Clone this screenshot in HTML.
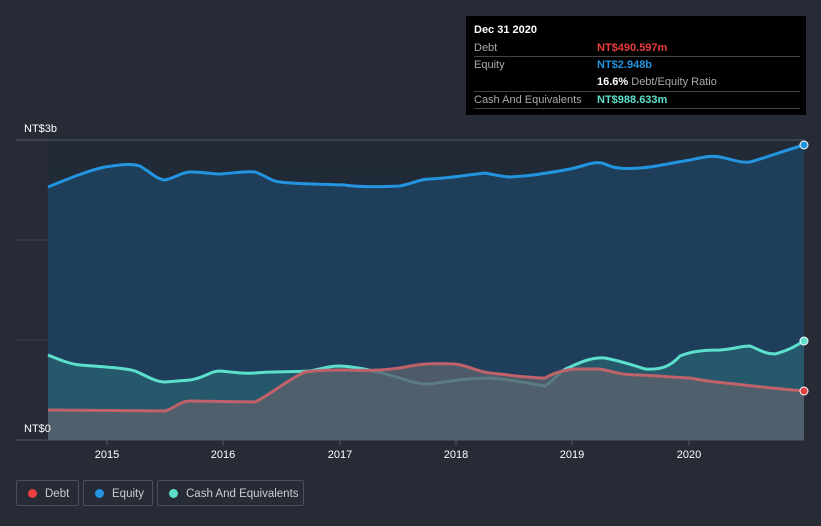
<!DOCTYPE html>
<html><head><style>
body{margin:0;width:821px;height:526px;background:#262b36;font-family:"Liberation Sans",sans-serif;overflow:hidden;position:relative}
.tt{position:absolute;left:466px;top:16px;width:340px;height:99px;background:#000;color:#fff;font-size:11px}
.tt .r{position:absolute;left:8px;width:326px;border-bottom:1px solid #444}
.lbl{color:#aaa;position:absolute;left:0}
.val{position:absolute;left:123px;font-weight:bold}
.leg{position:absolute;top:480px;height:26px;border:1px solid #4a5060;border-radius:2px;color:#ccc;font-size:11.5px;line-height:26px;box-sizing:border-box;white-space:nowrap;overflow:hidden}
.leg i{display:inline-block;width:9px;height:9px;border-radius:50%;margin:0 8px 0 11px;vertical-align:-1px}
</style></head><body>
<svg width="821" height="526" style="position:absolute;left:0;top:0">
<defs><linearGradient id="bg" x1="0" y1="0" x2="0" y2="1"><stop offset="0" stop-color="#222a36"/><stop offset="1" stop-color="#1a2c40"/></linearGradient></defs>
<rect x="48" y="140" width="756" height="300" fill="url(#bg)"/>
<line x1="16" y1="140" x2="804" y2="140" stroke="#555a66"/>
<line x1="16" y1="240" x2="804" y2="240" stroke="#3a4150"/>
<line x1="16" y1="340" x2="804" y2="340" stroke="#3a4150"/>
<path d="M48,187 C70,178 90,170 105,167 C120,165 130,163 140,166 C150,172 158,180 165,180 C175,178 182,172 190,172 C205,172 212,174 220,174 C235,173 245,171 255,172 C265,175 270,181 280,182 C295,184 315,184 345,185 C355,187 380,187 400,186 C415,183 420,179 430,179 C450,178 460,176 485,173 C495,175 505,177 510,177 C525,176 535,175 540,174 C555,172 565,170 570,169 C585,166 595,160 605,164 C615,169 625,169 640,168 C655,167 665,164 690,160 C700,158 710,155 720,157 C735,160 740,163 750,162 C765,158 780,152 804,145 L804,440 L48,440 Z" fill="#1f4260" opacity=".85"/>
<path d="M48,187 C70,178 90,170 105,167 C120,165 130,163 140,166 C150,172 158,180 165,180 C175,178 182,172 190,172 C205,172 212,174 220,174 C235,173 245,171 255,172 C265,175 270,181 280,182 C295,184 315,184 345,185 C355,187 380,187 400,186 C415,183 420,179 430,179 C450,178 460,176 485,173 C495,175 505,177 510,177 C525,176 535,175 540,174 C555,172 565,170 570,169 C585,166 595,160 605,164 C615,169 625,169 640,168 C655,167 665,164 690,160 C700,158 710,155 720,157 C735,160 740,163 750,162 C765,158 780,152 804,145" fill="none" stroke="#2394df" stroke-width="3"/>
<path d="M48,355 C60,360 70,364 80,365 C105,367 125,368 135,371 C145,375 155,382 165,382 L190,380 C205,378 210,371 220,371 C235,372 240,374 255,373 C275,371 295,372 310,371 C325,368 330,366 340,366 C360,367 380,372 400,378 C415,383 420,384 430,384 C450,381 470,378 490,378 C510,379 530,384 545,386 C555,380 560,370 570,367 C585,360 595,357 605,358 C620,361 630,364 645,369 C660,370 670,367 680,356 C690,352 700,350 720,350 C735,349 740,346 750,346 C760,350 765,354 775,354 C790,350 795,346 804,341 L804,440 L48,440 Z" fill="#2a6a74" opacity=".6"/>
<path d="M48,355 C60,360 70,364 80,365 C105,367 125,368 135,371 C145,375 155,382 165,382 L190,380 C205,378 210,371 220,371 C235,372 240,374 255,373 C275,371 295,372 310,371 C325,368 330,366 340,366 C360,367 380,372 400,378 C415,383 420,384 430,384 C450,381 470,378 490,378 C510,379 530,384 545,386 C555,380 560,370 570,367 C585,360 595,357 605,358 C620,361 630,364 645,369 C660,370 670,367 680,356 C690,352 700,350 720,350 C735,349 740,346 750,346 C760,350 765,354 775,354 C790,350 795,346 804,341" fill="none" stroke="#5ce0cc" stroke-width="3"/>
<path d="M48,410 L165,411 C175,408 180,401 190,401 L255,402 C270,395 290,378 305,372 C320,370 330,370 345,370 C370,371 390,370 405,367 C420,364 430,363 455,364 C470,366 475,371 490,373 C510,375 530,378 545,378 C555,372 565,370 575,369 L600,369 C615,372 620,375 640,375 C660,376 670,377 690,378 C705,381 715,382 735,384 C760,387 780,389 804,391 L804,440 L48,440 Z" fill="#5a616c" opacity=".8"/>
<path d="M48,410 L165,411 C175,408 180,401 190,401 L255,402 C270,395 290,378 305,372 C320,370 330,370 345,370 C370,371 390,370 405,367 C420,364 430,363 455,364 C470,366 475,371 490,373 C510,375 530,378 545,378 C555,372 565,370 575,369 L600,369 C615,372 620,375 640,375 C660,376 670,377 690,378 C705,381 715,382 735,384 C760,387 780,389 804,391" fill="none" stroke="#c0626a" stroke-width="3"/>
<line x1="16" y1="440" x2="804" y2="440" stroke="#555a66"/>
<g stroke="#555a66"><line x1="107" y1="440" x2="107" y2="445"/><line x1="223" y1="440" x2="223" y2="445"/><line x1="340" y1="440" x2="340" y2="445"/><line x1="456" y1="440" x2="456" y2="445"/><line x1="572" y1="440" x2="572" y2="445"/><line x1="689" y1="440" x2="689" y2="445"/></g>
<circle cx="804" cy="145" r="4" fill="#2394df" stroke="#fff" stroke-width="1"/>
<circle cx="804" cy="341" r="4" fill="#5ce0cc" stroke="#fff" stroke-width="1"/>
<circle cx="804" cy="391" r="4" fill="#e04040" stroke="#fff" stroke-width="1"/>
<g fill="#fff" font-size="11" font-family="Liberation Sans, sans-serif">
<text x="24" y="132">NT$3b</text><text x="24" y="432">NT$0</text>
<g text-anchor="middle"><text x="107" y="458">2015</text><text x="223" y="458">2016</text><text x="340" y="458">2017</text><text x="456" y="458">2018</text><text x="572" y="458">2019</text><text x="689" y="458">2020</text></g>
</g>
</svg>
<div class="tt">
<div style="position:absolute;left:8px;top:8px;font-weight:bold">Dec 31 2020</div>
<div class="r" style="top:24px;height:16px"><span class="lbl" style="top:2px">Debt</span><span class="val" style="top:2px;color:#e83b3b">NT$490.597m</span></div>
<div class="r" style="top:41px;height:34px"><span class="lbl" style="top:2px">Equity</span><span class="val" style="top:2px;color:#2394df">NT$2.948b</span><span class="val" style="top:19px;color:#fff">16.6% <span style="color:#aaa;font-weight:normal">Debt/Equity Ratio</span></span></div>
<div class="r" style="top:76px;height:16px"><span class="lbl" style="top:2px">Cash And Equivalents</span><span class="val" style="top:2px;color:#5ce0cc">NT$988.633m</span></div>
</div>
<div class="leg" style="left:16px;width:63px"><i style="background:#e84040"></i>Debt</div>
<div class="leg" style="left:83px;width:70px"><i style="background:#2394df"></i>Equity</div>
<div class="leg" style="left:157px;width:147px"><i style="background:#5ce0cc"></i>Cash And Equivalents</div>
</body></html>
